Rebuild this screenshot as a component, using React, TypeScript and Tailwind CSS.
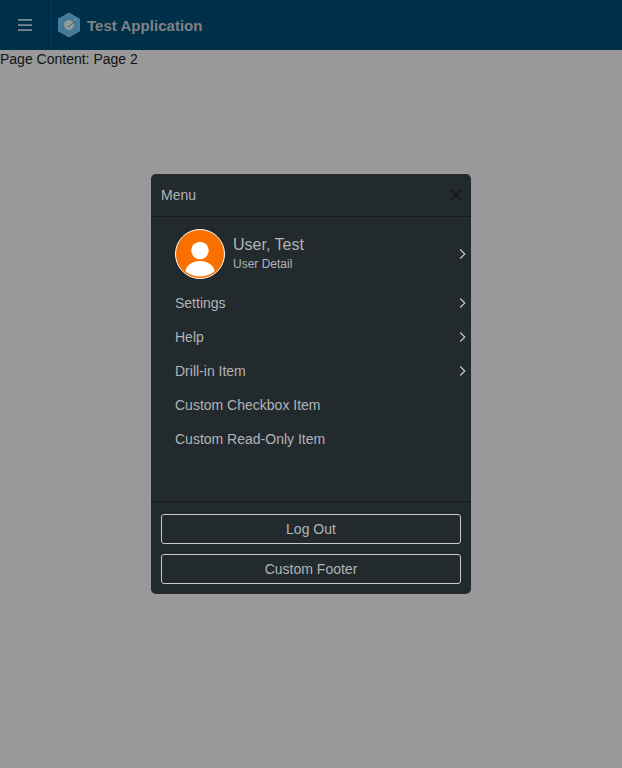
import React from 'react';

const items = [
  { label: 'Settings', drill: true },
  { label: 'Help', drill: true },
  { label: 'Drill-in Item', drill: true },
  { label: 'Custom Checkbox Item', drill: false },
  { label: 'Custom Read-Only Item', drill: false },
];

function Chevron() {
  return (
    <svg className="mr-[3px] h-[10px] w-[10px] shrink-0" viewBox="0 0 10 10" fill="none" stroke="#c4c7c8" strokeWidth="1.2">
      <path d="M2.200 0.500 6.800 5 2.200 9.500" />
    </svg>
  );
}

function Logo() {
  return (
    <svg className="ml-[6px] h-[26px] w-6 shrink-0" viewBox="0 0 24 26">
      <path d="M12 0.500 23 6.800V19.200L12 25.500 1 19.200V6.800Z" fill="#4b8099" />
      <path d="M12 2 21.700 7.500V18.500L12 24 2.300 18.500V7.500Z" fill="#447b9a" />
      <circle cx="12" cy="13" r="4.900" fill="#969a9b" />
      <path d="M8.200 17.200C5.600 19.400 5.600 17.200 7.600 15M10 14.600C12 15 13.800 13 15.600 11.200M16.200 8.600C17.200 7.700 18.200 7.200 18.800 7.400 19.700 8.100 17.900 10.200 16.300 11.800" fill="none" stroke="#2c6383" strokeWidth="0.900" />
      <circle cx="18.200" cy="8" r="1" fill="#8da3ad" />
      <circle cx="7" cy="18.200" r="0.600" fill="#7899a8" />
    </svg>
  );
}

function Avatar() {
  return (
    <svg className="h-[50px] w-[50px] shrink-0" viewBox="0 0 50 50">
      <defs>
        <clipPath id="avatar-circle">
          <circle cx="25" cy="25" r="22.500" />
        </clipPath>
      </defs>
      <circle cx="25" cy="25" r="24.500" fill="#fa7000" stroke="#fff" />
      <circle cx="25" cy="21.500" r="8.700" fill="#fff" />
      <path clipPath="url(#avatar-circle)" d="M10 43C11.500 36 17 32 25 32S38.500 36 40 43V50H10Z" fill="#fff" />
    </svg>
  );
}

export default function App() {
  return (
    <div className="relative h-screen overflow-hidden bg-[#999999] font-['Liberation_Sans',Arial,sans-serif] text-sm text-[#111314]">
      <header className="flex h-[50px] items-center bg-[#002f49]">
        <button className="flex h-full w-[51px] items-center justify-center border-r border-[#003e63] shadow-[inset_-1px_0_0_#00263b]" aria-label="Toggle menu">
          <svg className="h-[14px] w-[14px]" viewBox="0 0 14 14" fill="#7d8a92">
            <path d="M0 1H14V2.800H0ZM0 6.200H14V7.900H0ZM0 11.200H14V13H0Z" />
          </svg>
        </button>
        <Logo />
        <h1 className="ml-1.5 mt-0.5 text-[15px] font-bold tracking-[0.03px] text-[#808284]">Test Application</h1>
      </header>
      <main className="leading-[18px]">Page Content: Page 2</main>

      <div className="absolute inset-0 flex items-center justify-center">
        <section role="dialog" className="flex h-[420px] w-80 flex-col overflow-hidden rounded-[5px] bg-[#222a2d] text-[#b1b4b5]">
          <div className="flex h-[43px] shrink-0 items-center justify-between border-b border-[#181b1d] px-2.5">
            <h2>Menu</h2>
            <svg className="h-[10px] w-[10px] overflow-visible" viewBox="0 0 10 10" stroke="#161a1c" strokeWidth="1.900">
              <path d="M0 0 10 10M10 0 0 10" />
            </svg>
          </div>
          <ul className="flex-1 pt-[5px]">
            <li className="flex h-16 items-center pl-6">
              <Avatar />
              <div className="ml-2 flex-1">
                <div className="text-base leading-5">User, Test</div>
                <div className="text-xs leading-[18px]">User Detail</div>
              </div>
              <Chevron />
            </li>
            {items.map((item) => (
              <li key={item.label} className="flex h-[34px] items-center justify-between pl-6">
                <span>{item.label}</span>
                {item.drill && <Chevron />}
              </li>
            ))}
          </ul>
          <div className="flex shrink-0 flex-col gap-2.5 border-t border-[#181b1d] px-2.5 pb-2.5 pt-3">
            <button className="h-[30px] rounded-[3px] border border-[#c8cacb]">Log Out</button>
            <button className="h-[30px] rounded-[3px] border border-[#c8cacb]">Custom Footer</button>
          </div>
        </section>
      </div>
    </div>
  );
}
